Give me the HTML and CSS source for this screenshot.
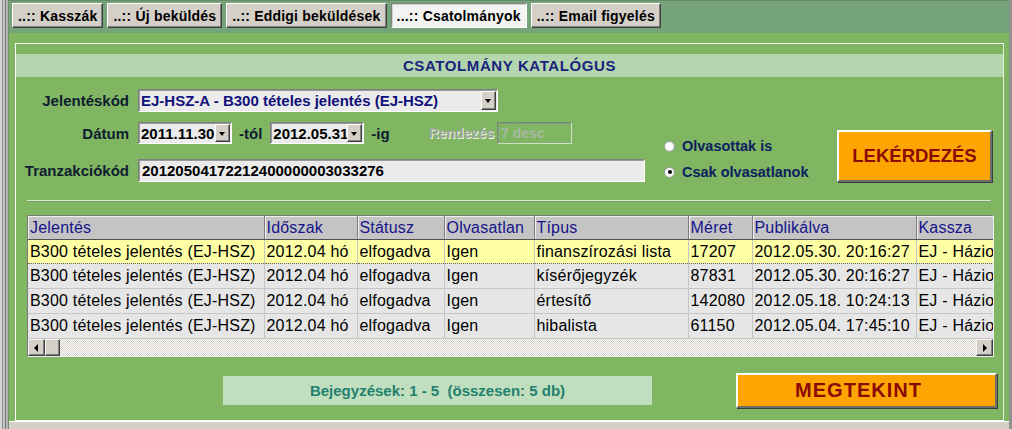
FILE: index.html
```html
<!DOCTYPE html>
<html lang="hu">
<head>
<meta charset="utf-8">
<title>Csatolmány katalógus</title>
<link rel="stylesheet" href="styles.css">
</head>
<body>
<div class="page">
  <div class="edge"></div>
  <div class="main">
    <div class="tabs">
      <button class="tab">..:: Kasszák</button>
      <button class="tab">..:: Új beküldés</button>
      <button class="tab">..:: Eddigi beküldések</button>
      <button class="tab active">...:: Csatolmányok</button>
      <button class="tab">..:: Email figyelés</button>
    </div>
    <div class="content">
      <div class="panel">
        <div class="title">CSATOLMÁNY KATALÓGUS</div>
        <div class="form">
          <div class="fields">
            <div class="row r1">
              <span class="lbl">Jelentéskód</span>
              <div class="select code"><span class="val navy">EJ-HSZ-A - B300 tételes jelentés (EJ-HSZ)</span><span class="arrow"></span></div>
            </div>
            <div class="row r2">
              <span class="lbl">Dátum</span>
              <div class="select date"><span class="val">2011.11.30</span><span class="arrow"></span></div>
              <span class="txt tol">-tól</span>
              <div class="select date"><span class="val">2012.05.31</span><span class="arrow"></span></div>
              <span class="txt ig">-ig</span>
              <span class="disabled">Rendezés</span>
              <div class="input off">7 desc</div>
            </div>
            <div class="row r3">
              <span class="lbl">Tranzakciókód</span>
              <div class="input tx">20120504172212400000003033276</div>
            </div>
          </div>
          <div class="radios">
            <div class="radio"><span class="dot"></span><span class="rtxt">Olvasottak is</span></div>
            <div class="radio"><span class="dot on"></span><span class="rtxt">Csak olvasatlanok</span></div>
          </div>
          <button class="btn query">LEKÉRDEZÉS</button>
        </div>
        <div class="sep"></div>
        <div class="grid">
          <div class="grid-body">
            <table>
              <colgroup>
                <col class="c1"><col class="c2"><col class="c3"><col class="c4"><col class="c5"><col class="c6"><col class="c7"><col class="c8">
              </colgroup>
              <thead>
                <tr><th>Jelentés</th><th>Időszak</th><th>Státusz</th><th>Olvasatlan</th><th>Típus</th><th>Méret</th><th>Publikálva</th><th>Kassza</th></tr>
              </thead>
              <tbody>
                <tr class="sel"><td>B300 tételes jelentés (EJ-HSZ)</td><td>2012.04 hó</td><td>elfogadva</td><td>Igen</td><td>finanszírozási lista</td><td>17207</td><td>2012.05.30. 20:16:27</td><td>EJ - Háziorvos</td></tr>
                <tr><td>B300 tételes jelentés (EJ-HSZ)</td><td>2012.04 hó</td><td>elfogadva</td><td>Igen</td><td>kísérőjegyzék</td><td>87831</td><td>2012.05.30. 20:16:27</td><td>EJ - Háziorvos</td></tr>
                <tr><td>B300 tételes jelentés (EJ-HSZ)</td><td>2012.04 hó</td><td>elfogadva</td><td>Igen</td><td>értesítő</td><td>142080</td><td>2012.05.18. 10:24:13</td><td>EJ - Háziorvos</td></tr>
                <tr><td>B300 tételes jelentés (EJ-HSZ)</td><td>2012.04 hó</td><td>elfogadva</td><td>Igen</td><td>hibalista</td><td>61150</td><td>2012.05.04. 17:45:10</td><td>EJ - Háziorvos</td></tr>
              </tbody>
            </table>
          </div>
          <div class="hscroll">
            <span class="sbtn left"></span>
            <span class="thumb"></span>
            <span class="track"></span>
            <span class="sbtn right"></span>
          </div>
        </div>
        <div class="footer">
          <div class="count">Bejegyzések: 1 - 5&nbsp; (összesen: 5 db)</div>
          <button class="btn view">MEGTEKINT</button>
        </div>
      </div>
    </div>
    <div class="bottom"></div>
  </div>
</div>
</body>
</html>
```
FILE: styles.css
```css
html, body {
  margin: 0;
  padding: 0;
}
body {
  width: 1012px;
  height: 429px;
  overflow: hidden;
  background: #d4d0c8;
  font-family: "Liberation Sans", Arial, sans-serif;
}
.page {
  display: flex;
  width: 1012px;
  height: 429px;
}
.edge {
  flex: none;
  width: 9px;
  background: linear-gradient(to right, #d6d6d6 0 2px, #8c8c8c 2px 3px, #c4c4c4 3px 5px, #7c7c7c 5px 6px, #b4b4b4 6px 8px, #6f8f6f 8px 9px);
}
.main {
  flex: 1;
  min-width: 0;
  display: flex;
  flex-direction: column;
  border-right: 3px solid #8d938d;
}
.tabs {
  flex: none;
  height: 33px;
  box-sizing: border-box;
  background: #75a37a;
  border-top: 1px solid #6a8a6d;
  padding: 2px 0 0 3px;
  display: flex;
  gap: 4px;
  align-items: flex-start;
}
.tab {
  height: 25px;
  margin: 0;
  padding: 0 5px;
  font: bold 14px "Liberation Sans", Arial, sans-serif;
  letter-spacing: 0.2px;
  color: #000;
  background: #d4d0c8;
  border: 1px solid;
  border-color: #fff #404040 #404040 #fff;
  box-shadow: inset -1px -1px 0 #808080;
}
.tab.active {
  background: #f3f3f1;
  border-color: #808080 #fff #fff #808080;
  box-shadow: inset 1px 1px 0 #d0d0d0;
}
.content {
  flex: 1;
  min-width: 0;
  background: #80b662;
  padding: 10px 5px 0 6px;
  display: flex;
  flex-direction: column;
}
.panel {
  min-width: 0;
  height: 378px;
  box-sizing: border-box;
  border: 1px solid #fff;
  border-right-color: #e6eee2;
  display: flex;
  flex-direction: column;
}
.bottom {
  flex: none;
  height: 7px;
  background: #d4d0c8;
  border-top: 1px solid #fff;
}
.title {
  margin-top: 10px;
  height: 23px;
  line-height: 23px;
  background: #b3d6ae;
  color: #1a237e;
  text-align: center;
  font-size: 15px;
  font-weight: bold;
  letter-spacing: 0.6px;
}
.form {
  display: flex;
  align-items: flex-start;
  margin-top: 12px;
}
.fields {
  width: 629px;
  flex: none;
}
.row {
  display: flex;
  align-items: center;
}
.r1 { height: 23px; }
.r2 { height: 22px; margin-top: 10px; }
.r3 { height: 23px; margin-top: 15px; }
.lbl {
  width: 113px;
  margin-right: 9px;
  text-align: right;
  font-size: 15px;
  font-weight: bold;
  color: #0f1c30;
  white-space: nowrap;
}
.select, .input {
  box-sizing: border-box;
  height: 100%;
  background: #ebebeb;
  border: 1px solid;
  border-color: #7f7f7f #fff #fff #7f7f7f;
  box-shadow: inset 1px 1px 0 #9a9a9a;
  font-size: 15px;
  font-weight: bold;
  color: #000;
  white-space: nowrap;
}
.select {
  display: flex;
  align-items: center;
}
.select .val {
  flex: 1;
  padding-left: 2px;
  overflow: hidden;
}
.navy { color: #10107a; }
.code { width: 360px; }
.date { width: 94px; }
.arrow {
  position: relative;
  flex: none;
  width: 15px;
  height: calc(100% - 2px);
  margin-right: 1px;
  box-sizing: border-box;
  background: #d4d0c8;
  border: 1px solid;
  border-color: #fff #404040 #404040 #fff;
  box-shadow: inset -1px -1px 0 #808080;
}
.arrow::after {
  content: "";
  position: absolute;
  left: 3px;
  top: 7px;
  border-left: 3.5px solid transparent;
  border-right: 3.5px solid transparent;
  border-top: 4px solid #000;
}
.txt {
  font-size: 15px;
  font-weight: bold;
  color: #0f1c30;
}
.tol { margin: 0 8px 0 7px; }
.ig { margin: 0 39px 0 7px; }
.disabled {
  font-size: 14px;
  font-weight: bold;
  color: #96a88e;
  text-shadow: 1px 1px 0 #f4f4f4;
  margin-right: 3px;
}
.input {
  display: flex;
  align-items: center;
  padding-left: 3px;
}
.input.off {
  width: 75px;
  background: #80b662;
  color: #a8b8a0;
  font-size: 14px;
  border-color: #6f8f66 #cfdfc8 #cfdfc8 #6f8f66;
  box-shadow: inset 1px 1px 0 #8a9a88;
}
.input.tx {
  width: 507px;
}
.radios {
  margin: 44px 0 0 19px;
}
.radio {
  height: 26px;
  display: flex;
  align-items: center;
}
.dot {
  width: 11px;
  height: 11px;
  box-sizing: border-box;
  border-radius: 50%;
  background: radial-gradient(circle at 40% 40%, #ffffff 0 45%, #d8d8d8 100%);
  border: 1px solid #a0a0a0;
  margin-right: 7px;
  position: relative;
}
.dot.on::after {
  content: "";
  position: absolute;
  left: 2.5px;
  top: 2.5px;
  width: 4px;
  height: 4px;
  border-radius: 50%;
  background: #000;
}
.rtxt {
  font-size: 14.5px;
  font-weight: bold;
  color: #0c2060;
}
.btn {
  margin: 0;
  padding: 0;
  box-sizing: border-box;
  background: #ffa502;
  border: 2px solid;
  border-color: #ffffff #6e6e6e #6e6e6e #ffffff;
  box-shadow: 1px 1px 0 #3c3c3c;
  color: #8a0a06;
  font-family: "Liberation Sans", Arial, sans-serif;
  font-weight: bold;
  cursor: pointer;
}
.query {
  width: 155px;
  height: 52px;
  margin: 41px 11px 0 auto;
  font-size: 18.5px;
}
.sep {
  margin: 15px 12px 0 11px;
  border-top: 1px solid #d9e9d2;
  border-bottom: 1px solid #74a35a;
}
.grid {
  margin: 13px 9px 0 11px;
  min-width: 0;
  border: 1px solid;
  border-color: #7a7a7a #f0f0f0 #f0f0f0 #7a7a7a;
  background: #e6e6e6;
}
.grid-body {
  overflow: hidden;
}
table {
  border-collapse: collapse;
  table-layout: fixed;
  width: 1010px;
  font-size: 16px;
  letter-spacing: 0.2px;
}
col.c1 { width: 236px; }
col.c2 { width: 93px; }
col.c3 { width: 87px; }
col.c4 { width: 90px; }
col.c5 { width: 154px; }
col.c6 { width: 64px; }
col.c7 { width: 164px; }
col.c8 { width: 122px; }
th, td {
  padding: 0 0 0 2px;
  text-align: left;
  white-space: nowrap;
  overflow: hidden;
}
th {
  height: 23px;
  background: #c4c4c4;
  color: #15158a;
  font-weight: normal;
  border-right: 1px solid #7c7c7c;
  border-bottom: 1px solid #505050;
  box-shadow: inset 1px 1px 0 #f0f0f0;
}
td {
  height: 24px;
  color: #000;
  background: #e6e6e6;
  border-right: 1px solid #c6c6c6;
  border-bottom: 1px solid #c6c6c6;
}
tr.sel td {
  background: #ffffa6;
  border-top: 1px dotted #6a6a40;
  border-bottom: 1px dotted #6a6a40;
  height: 23px;
}
.hscroll {
  display: flex;
  height: 17px;
  background-color: #f4f4f4;
  background-image: repeating-conic-gradient(#d4d0c8 0 25%, #ffffff 0 50%);
  background-size: 2px 2px;
}
.sbtn, .thumb {
  flex: none;
  width: 17px;
  height: 17px;
  box-sizing: border-box;
  background: #d4d0c8;
  border: 1px solid;
  border-color: #f4f4f4 #404040 #404040 #f4f4f4;
  box-shadow: inset -1px -1px 0 #808080;
  position: relative;
}
.thumb { width: 15px; }
.track { flex: 1; }
.sbtn::after {
  content: "";
  position: absolute;
  top: 4px;
  border-top: 4px solid transparent;
  border-bottom: 4px solid transparent;
}
.sbtn.left::after {
  left: 5px;
  border-right: 4px solid #000;
}
.sbtn.right::after {
  left: 6px;
  border-left: 4px solid #000;
}
.footer {
  display: flex;
  align-items: center;
  margin-top: 16px;
}
.count {
  margin-left: 207px;
  width: 429px;
  height: 29px;
  line-height: 29px;
  background: #c1dfbe;
  color: #23806e;
  text-align: center;
  font-size: 15px;
  font-weight: bold;
  white-space: pre;
}
.view {
  margin-left: 84px;
  width: 261px;
  height: 35px;
  padding-right: 16px;
  font-size: 20px;
  letter-spacing: 1px;
}
```
